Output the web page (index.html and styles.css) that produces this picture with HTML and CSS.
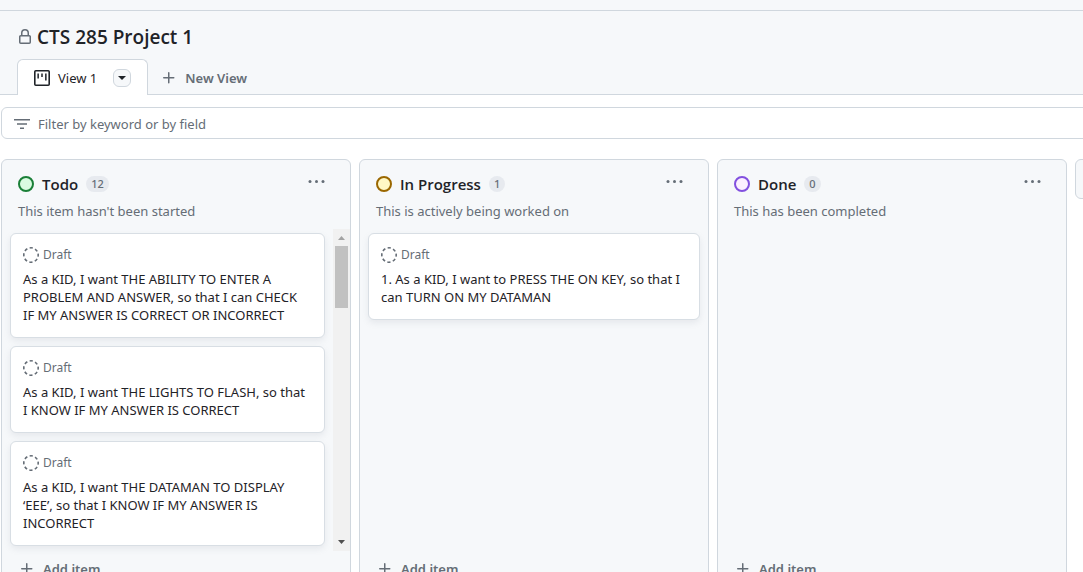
FILE: index.html
```html
<!DOCTYPE html>
<html lang="en">
<head>
<meta charset="utf-8">
<title>CTS 285 Project 1</title>
<link rel="stylesheet" href="styles.css">
</head>
<body>
<svg class="sprite" aria-hidden="true">
  <symbol id="plus" viewBox="0 0 16 16"><path d="M7.75 2a.75.75 0 0 1 .75.75V7h4.25a.75.75 0 0 1 0 1.5H8.5v4.25a.75.75 0 0 1-1.5 0V8.5H2.75a.75.75 0 0 1 0-1.5H7V2.75A.75.75 0 0 1 7.75 2Z"/></symbol>
  <symbol id="dots" viewBox="0 0 18 16"><circle cx="2" cy="7.5" r="1.5"/><circle cx="8.5" cy="7.5" r="1.5"/><circle cx="15" cy="7.5" r="1.5"/></symbol>
  <symbol id="draft" viewBox="0 0 16 16"><circle cx="8" cy="8" r="7.2" fill="none" stroke="currentColor" stroke-width="1.6" stroke-dasharray="3.2 2.455" stroke-dashoffset="1.6"/></symbol>
</svg>
<div class="app">
  <div class="topbar"></div>
  <header class="header">
    <div class="title-row">
      <svg class="lock" viewBox="0 0 16 16" aria-label="Private"><path d="M4 4a4 4 0 0 1 8 0v2h.25c.966 0 1.75.784 1.75 1.75v5.5A1.75 1.75 0 0 1 12.25 15h-8.5A1.75 1.75 0 0 1 2 13.25v-5.5C2 6.784 2.784 6 3.75 6H4Zm8.25 3.5h-8.5a.25.25 0 0 0-.25.25v5.5c0 .138.112.25.25.25h8.5a.25.25 0 0 0 .25-.25v-5.5a.25.25 0 0 0-.25-.25ZM10.5 6V4a2.5 2.5 0 1 0-5 0v2Z"/></svg>
      <h1 class="title">CTS 285 Project 1</h1>
    </div>
    <nav class="tabs" aria-label="Views">
      <div class="tab">
        <a class="tab-link" href="#view-1">
          <svg class="icon" viewBox="0 0 16 16"><rect x=".8" y=".8" width="14.4" height="14.4" rx="1" fill="none" stroke="currentColor" stroke-width="1.6"/><path d="M3.4 3.5h1.5v5H3.4zM7.25 3.5h1.5v3.6h-1.5zM11.1 3.5h1.5v7h-1.5z"/></svg>
          <span>View 1</span>
        </a>
        <button class="tab-menu" type="button" aria-label="View options"><svg viewBox="0 0 8 4"><path d="M0 0h8L4 4z"/></svg></button>
      </div>
      <button class="new-view" type="button"><svg class="icon"><use href="#plus"/></svg>New View</button>
    </nav>
  </header>
  <label class="filter">
    <svg class="icon" viewBox="0 0 16 16"><path d="M0 3h16v1.4H0zM3 7.3h10v1.4H3zM6 11.6h4V13H6z"/></svg>
    <input class="filter-input" type="text" placeholder="Filter by keyword or by field" aria-label="Filter by keyword or by field">
  </label>
  <main class="board" id="view-1">
    <section class="column">
      <header class="column-head">
        <div class="column-title"><span class="dot dot-green"></span><h2 class="name">Todo</h2><span class="count">12</span></div>
        <button class="kebab" type="button" aria-label="Todo options"><svg><use href="#dots"/></svg></button>
        <p class="note">This item hasn't been started</p>
      </header>
      <div class="column-body">
        <div class="cards">
          <article class="card"><div class="kind"><svg class="icon"><use href="#draft"/></svg>Draft</div><p class="text">As a KID, I want THE ABILITY TO ENTER A PROBLEM AND ANSWER, so that I can CHECK<br>IF MY ANSWER IS CORRECT OR INCORRECT</p></article>
          <article class="card"><div class="kind"><svg class="icon"><use href="#draft"/></svg>Draft</div><p class="text">As a KID, I want THE LIGHTS TO FLASH, so that<br>I KNOW IF MY ANSWER IS CORRECT</p></article>
          <article class="card"><div class="kind"><svg class="icon"><use href="#draft"/></svg>Draft</div><p class="text">As a KID, I want THE DATAMAN TO DISPLAY ‘EEE’, so that I KNOW IF MY ANSWER IS INCORRECT</p></article>
        </div>
        <div class="scrollbar" aria-hidden="true">
          <svg class="arrow arrow-up" viewBox="0 0 7 4"><path d="M0 4h7L3.5 0z"/></svg>
          <div class="thumb"></div>
          <svg class="arrow arrow-down" viewBox="0 0 7 4"><path d="M0 0h7L3.5 4z"/></svg>
        </div>
      </div>
      <button class="add" type="button"><svg class="icon"><use href="#plus"/></svg>Add item</button>
    </section>
    <section class="column">
      <header class="column-head">
        <div class="column-title"><span class="dot dot-yellow"></span><h2 class="name">In Progress</h2><span class="count">1</span></div>
        <button class="kebab" type="button" aria-label="In Progress options"><svg><use href="#dots"/></svg></button>
        <p class="note">This is actively being worked on</p>
      </header>
      <div class="column-body">
        <div class="cards">
          <article class="card"><div class="kind"><svg class="icon"><use href="#draft"/></svg>Draft</div><p class="text">1. As a KID, I want to PRESS THE ON KEY, so that I can TURN ON MY DATAMAN</p></article>
        </div>
      </div>
      <button class="add" type="button"><svg class="icon"><use href="#plus"/></svg>Add item</button>
    </section>
    <section class="column">
      <header class="column-head">
        <div class="column-title"><span class="dot dot-purple"></span><h2 class="name">Done</h2><span class="count">0</span></div>
        <button class="kebab" type="button" aria-label="Done options"><svg><use href="#dots"/></svg></button>
        <p class="note">This has been completed</p>
      </header>
      <div class="column-body"></div>
      <button class="add" type="button"><svg class="icon"><use href="#plus"/></svg>Add item</button>
    </section>
    <button class="new-column" type="button" aria-label="Add column"></button>
  </main>
</div>
</body>
</html>
```
FILE: styles.css
```css
* { box-sizing: border-box; }
body {
  margin: 0;
  background: #fff;
  color: #1f2328;
  font: 13px/20px "Noto Sans", "Open Sans", sans-serif;
}
h1, h2, p { margin: 0; }
button { border: 0; padding: 0; background: none; color: inherit; font: inherit; }
svg { display: block; flex: none; fill: currentColor; }
.sprite { position: absolute; width: 0; height: 0; }
.icon { width: 16px; height: 16px; }
.app { height: 100vh; overflow: hidden; }

.topbar { height: 11px; background: #f6f8fa; border-bottom: 1px solid #d0d7de; }
.header { padding: 12px 17px 0; background: #f6f8fa; border-bottom: 1px solid #d0d7de; }
.title-row { display: flex; align-items: center; gap: 4px; height: 28px; }
.lock { width: 16px; height: 16px; color: #656d76; }
.title { font: 600 19px/28px "Open Sans", "Noto Sans", sans-serif; }
.tabs { display: flex; margin: 8px 0 -1px; }
.tab {
  display: flex;
  align-items: center;
  gap: 16px;
  height: 36px;
  padding: 0 16px;
  background: #fff;
  border: 1px solid #d0d7de;
  border-bottom: 0;
  border-radius: 6px 6px 0 0;
}
.tab-link { display: flex; align-items: center; gap: 8px; color: inherit; text-decoration: none; }
.tab-menu {
  display: flex;
  align-items: center;
  justify-content: center;
  width: 18px;
  height: 18px;
  background: #f6f8fa;
  border: 1px solid #d0d7de;
  border-radius: 6px;
}
.tab-menu svg { width: 8px; height: 4px; }
.new-view { display: flex; align-items: center; gap: 8px; height: 38px; padding: 0 13px; margin-bottom: -2px; color: #656d76; font-weight: 600; }

.filter {
  display: flex;
  align-items: center;
  gap: 8px;
  height: 32px;
  margin: 12px -8px 0 1px;
  padding: 2px 12px 0;
  border: 1px solid #d0d7de;
  border-radius: 6px;
  color: #656d76;
}
.filter-input { flex: 1; min-width: 0; padding: 0; border: 0; outline: 0; background: none; font: inherit; color: #1f2328; }
.filter-input::placeholder { color: #656d76; opacity: 1; }

.board { display: flex; gap: 8px; margin: 20px 0 0 1px; }
.column {
  display: flex;
  flex: 0 0 350px;
  flex-direction: column;
  background: #f6f8fa;
  border: 1px solid #d0d7de;
  border-radius: 6px;
}
.column-head {
  display: grid;
  grid-template-columns: 1fr auto;
  row-gap: 7px;
  padding: 14px 24px 8px 16px;
}
.column-title { display: flex; align-items: center; gap: 8px; }
.dot { width: 16px; height: 16px; border: 2px solid; border-radius: 50%; }
.dot-green { border-color: #1a7f37; background: #dafbe1; }
.dot-yellow { border-color: #9a6700; background: #fff8c5; }
.dot-purple { border-color: #8250df; background: #fbefff; }
.name { font: 600 15px/20px "Open Sans", "Noto Sans", sans-serif; }
.count { padding: 0 5px; border-radius: 8px; background: #e7eaef; color: #656d76; font-size: 11px; line-height: 16px; font-weight: 500; }
.kebab { height: 16px; color: #656d76; }
.kebab svg { width: 18px; height: 16px; }
.note { color: #656d76; }
.column-body { display: flex; flex: 1; }
.cards { display: flex; flex: 1; flex-direction: column; gap: 8px; padding: 4px 8px 5px; }
.card {
  padding: 12px 12px 13px;
  background: #fff;
  border: 1px solid #d8dee4;
  border-radius: 6px;
  box-shadow: 0 3px 6px rgba(140, 149, 159, 0.15);
}
.kind { display: flex; align-items: center; gap: 4px; height: 18px; margin-bottom: 6px; color: #656d76; font-size: 12px; line-height: 18px; }
.text { line-height: 18px; }
.scrollbar { display: flex; flex-direction: column; align-items: center; width: 17px; background: #f1f1f1; }
.arrow { width: 7px; height: 4px; }
.arrow-up { margin: 7px 0 6px; color: #a3a3a3; }
.arrow-down { margin: auto 0 7px; color: #505050; }
.thumb { width: 13px; height: 62px; background: #c1c1c1; }
.add { display: flex; align-items: center; gap: 8px; height: 36px; padding: 0 17px; color: #656d76; font-weight: 600; }
.new-column { flex: 0 0 40px; height: 40px; background: #f6f8fa; border: 1px solid #d0d7de; border-radius: 6px; }
```
